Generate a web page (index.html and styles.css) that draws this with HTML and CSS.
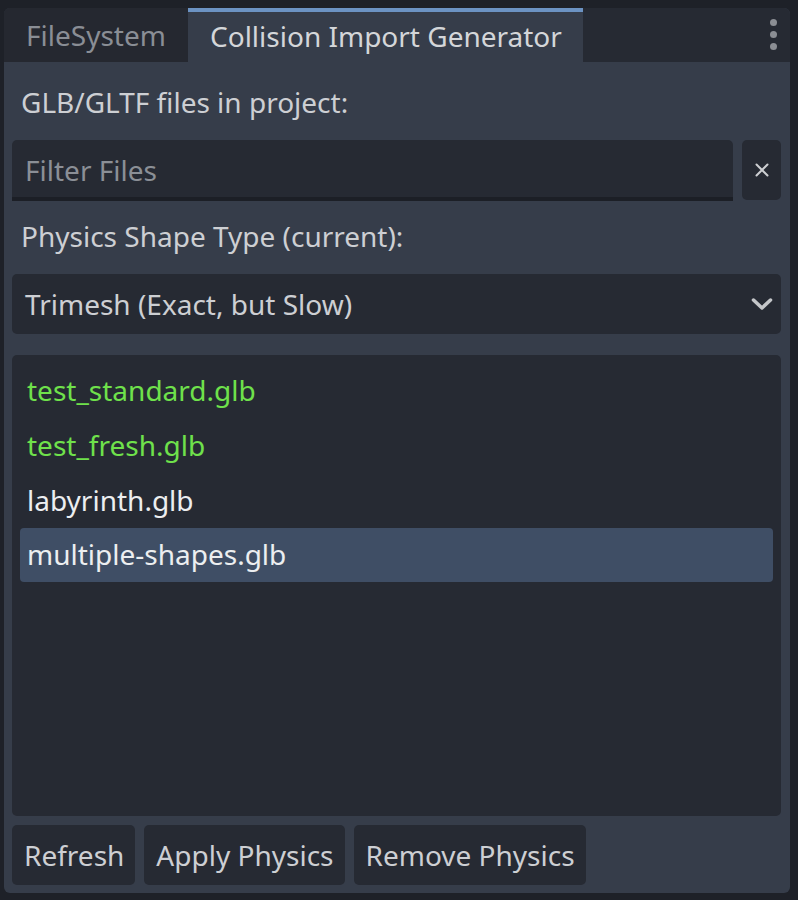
FILE: index.html
```html
<!DOCTYPE html>
<html>
<head>
<meta charset="utf-8">
<link rel="stylesheet" href="styles.css">
</head>
<body>
<div class="panel">
  <div class="tabbar">
    <div class="tab">FileSystem</div>
    <div class="tab active">Collision Import Generator</div>
    <div class="spacer"></div>
    <div class="kebab"><span></span><span></span><span></span></div>
  </div>
  <div class="content">
    <div class="label first">GLB/GLTF files in project:</div>
    <div class="filter-row">
      <div class="input">Filter Files</div>
      <div class="clear">
        <svg width="14" height="14" viewBox="0 0 14 14"><path d="M1.5 1.5 L12.5 12.5 M12.5 1.5 L1.5 12.5" stroke="#cdcfd2" stroke-width="2" stroke-linecap="round"/></svg>
      </div>
    </div>
    <div class="label second">Physics Shape Type (current):</div>
    <div class="dropdown">
      <span>Trimesh (Exact, but Slow)</span>
      <svg width="22" height="14" viewBox="0 0 22 14"><path d="M2.5 3 L11 11 L19.5 3" stroke="#c4c6c9" stroke-width="3.5" fill="none" stroke-linecap="round" stroke-linejoin="round"/></svg>
    </div>
    <div class="list">
      <div class="item ok">test_standard.glb</div>
      <div class="item ok">test_fresh.glb</div>
      <div class="item">labyrinth.glb</div>
      <div class="item selected">multiple-shapes.glb</div>
    </div>
    <div class="buttons">
      <div class="btn">Refresh</div>
      <div class="btn">Apply Physics</div>
      <div class="btn">Remove Physics</div>
    </div>
  </div>
</div>
</body>
</html>
```
FILE: styles.css
```css
html, body {
  margin: 0;
  padding: 0;
  background: #1e2128;
  width: 798px;
  height: 900px;
  overflow: hidden;
}
body {
  font-family: "Noto Sans", "Open Sans", sans-serif;
  font-size: 28px;
  color: #cdcfd3;
  white-space: nowrap;
}
.panel {
  margin: 8px 0 0 4px;
  width: 786px;
  height: 885px;
  background: #363d4a;
  border-radius: 6px;
  display: flex;
  flex-direction: column;
}
.tabbar {
  height: 54px;
  display: flex;
  background: #262a33;
  border-radius: 6px 6px 0 0;
}
.tab {
  box-sizing: border-box;
  height: 54px;
  display: flex;
  align-items: center;
  padding: 0 22px;
  color: #8a8e95;
  width: 184px;
  flex-shrink: 0;
  background: #252830;
  border-top-left-radius: 6px;
}
.tab.active {
  width: 395px;
  background: #363d4a;
  color: #d4d6d9;
  border-top: 4px solid #6c93c3;
  border-radius: 0;
  padding-bottom: 2px;
}
.spacer { flex: 1; }
.kebab {
  width: 34px;
  display: flex;
  flex-direction: column;
  align-items: center;
  padding-top: 11px;
  gap: 5px;
}
.kebab span {
  width: 7px;
  height: 7px;
  border-radius: 50%;
  background: #8b8e94;
}
.content {
  flex: 1;
  display: flex;
  flex-direction: column;
  padding: 8px 9px 8px 8px;
}
.label {
  display: flex;
  align-items: center;
  padding-left: 9px;
}
.label.first { height: 62px; padding-top: 2px; box-sizing: border-box; }
.label.second { height: 57px; margin-top: 8px; margin-bottom: 8px; padding-bottom: 3px; box-sizing: border-box; }
.filter-row {
  display: flex;
  gap: 9px;
  margin-top: 8px;
  height: 61px;
}
.input {
  flex: 1;
  box-sizing: border-box;
  background: #262a33;
  border-bottom: 4px solid #1c1f26;
  border-radius: 5px 5px 0 0;
  display: flex;
  align-items: center;
  padding: 2px 13px 0;
  color: #8b8f96;
}
.clear {
  width: 39px;
  height: 60px;
  background: #262a33;
  border-radius: 5px;
  display: flex;
  align-items: center;
  justify-content: center;
}
.dropdown {
  height: 60px;
  box-sizing: border-box;
  background: #262a33;
  border-radius: 5px;
  display: flex;
  align-items: center;
  justify-content: space-between;
  padding: 0 8px 0 13px;
}
.list {
  margin-top: 21px;
  height: 461px;
  background: #262a33;
  border-radius: 5px;
  box-sizing: border-box;
  padding: 8px;
}
.item {
  height: 55px;
  display: flex;
  align-items: center;
  padding: 0 7px 2px;
  box-sizing: border-box;
  color: #eceef0;
}
.item.ok { color: #6fe14b; }
.item.selected {
  background: #3f4e65;
  border-radius: 4px;
  height: 54px;
}
.buttons {
  margin-top: 9px;
  display: flex;
  gap: 9px;
  height: 60px;
}
.btn {
  background: #262a33;
  border-radius: 5px;
  display: flex;
  align-items: center;
  padding: 0 11px 0 12px;
  color: #cdcfd3;
}
```
